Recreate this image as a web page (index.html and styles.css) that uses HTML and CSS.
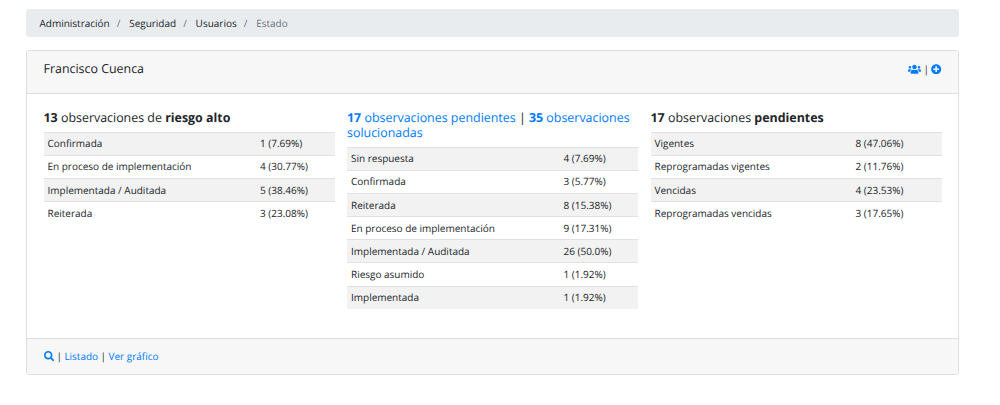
FILE: index.html
```html
<!DOCTYPE html>
<html lang="es">
<head>
<meta charset="utf-8">
<title>Estado</title>
<link rel="stylesheet" href="styles.css">
</head>
<body>
<nav class="breadcrumb">
  <a class="crumb">Administración</a><span class="sep">/</span><a class="crumb">Seguridad</a><span class="sep">/</span><a class="crumb">Usuarios</a><span class="sep">/</span><span class="crumb active">Estado</span>
</nav>
<main class="card">
  <header class="card-header">
    <h1 class="title">Francisco Cuenca</h1>
    <div class="actions">
      <svg class="icon users" viewBox="0 0 640 512"><path d="M96 224c35.300 0 64-28.700 64-64s-28.700-64-64-64-64 28.700-64 64 28.700 64 64 64zm448 0c35.300 0 64-28.700 64-64s-28.700-64-64-64-64 28.700-64 64 28.700 64 64 64zm32 32h-64c-17.600 0-33.500 7.100-45.100 18.600 40.300 22.100 68.900 62 75.100 109.400h66c17.700 0 32-14.300 32-32v-32c0-35.300-28.700-64-64-64zm-256 0c61.900 0 112-50.100 112-112S381.900 32 320 32 208 82.100 208 144s50.100 112 112 112zm76.800 32h-8.300c-20.800 10-43.900 16-68.500 16s-47.600-6-68.500-16h-8.300C179.600 288 128 339.600 128 403.200V432c0 26.500 21.500 48 48 48h288c26.500 0 48-21.500 48-48v-28.800c0-63.600-51.600-115.200-115.200-115.200zm-223.700-13.400C161.500 263.100 145.600 256 128 256H64c-35.300 0-64 28.700-64 64v32c0 17.700 14.300 32 32 32h65.900c6.300-47.400 34.900-87.300 75.200-109.400z"/></svg>
      <span class="pipe">|</span>
      <svg class="icon" viewBox="0 0 512 512"><path d="M256 8C119 8 8 119 8 256s111 248 248 248 248-111 248-248S393 8 256 8zm144 276c0 6.600-5.400 12-12 12h-92v92c0 6.600-5.400 12-12 12h-56c-6.600 0-12-5.400-12-12v-92h-92c-6.600 0-12-5.400-12-12v-56c0-6.600 5.400-12 12-12h92v-92c0-6.600 5.400-12 12-12h56c6.600 0 12 5.400 12 12v92h92c6.600 0 12 5.400 12 12v56z"/></svg>
    </div>
  </header>
  <div class="card-body">
    <section>
      <h2 class="heading"><b>13</b> observaciones de <b>riesgo alto</b></h2>
      <div class="table">
        <div class="row"><span>Confirmada</span><span>1 (7.69%)</span></div>
        <div class="row"><span>En proceso de implementación</span><span>4 (30.77%)</span></div>
        <div class="row"><span>Implementada / Auditada</span><span>5 (38.46%)</span></div>
        <div class="row"><span>Reiterada</span><span>3 (23.08%)</span></div>
      </div>
    </section>
    <section>
      <h2 class="heading"><a class="link"><b>17</b> observaciones pendientes</a> | <a class="link"><b>35</b> observaciones<br>solucionadas</a></h2>
      <div class="table">
        <div class="row"><span>Sin respuesta</span><span>4 (7.69%)</span></div>
        <div class="row"><span>Confirmada</span><span>3 (5.77%)</span></div>
        <div class="row"><span>Reiterada</span><span>8 (15.38%)</span></div>
        <div class="row"><span>En proceso de implementación</span><span>9 (17.31%)</span></div>
        <div class="row"><span>Implementada / Auditada</span><span>26 (50.0%)</span></div>
        <div class="row"><span>Riesgo asumido</span><span>1 (1.92%)</span></div>
        <div class="row"><span>Implementada</span><span>1 (1.92%)</span></div>
      </div>
    </section>
    <section>
      <h2 class="heading"><b>17</b> observaciones <b>pendientes</b></h2>
      <div class="table narrow">
        <div class="row"><span>Vigentes</span><span>8 (47.06%)</span></div>
        <div class="row"><span>Reprogramadas vigentes</span><span>2 (11.76%)</span></div>
        <div class="row"><span>Vencidas</span><span>4 (23.53%)</span></div>
        <div class="row"><span>Reprogramadas vencidas</span><span>3 (17.65%)</span></div>
      </div>
    </section>
  </div>
  <footer class="card-footer">
    <svg class="icon" viewBox="0 0 512 512"><path d="M505 442.700L405.300 343c-4.500-4.500-10.600-7-17-7H372c27.600-35.300 44-79.700 44-128C416 93.100 322.900 0 208 0S0 93.100 0 208s93.100 208 208 208c48.300 0 92.700-16.400 128-44v16.300c0 6.400 2.500 12.500 7 17l99.700 99.700c9.400 9.400 24.600 9.400 33.900 0l28.300-28.300c9.400-9.400 9.400-24.600.1-34zM208 336c-70.700 0-128-57.200-128-128 0-70.700 57.200-128 128-128 70.700 0 128 57.200 128 128 0 70.700-57.200 128-128 128z"/></svg>
    <span class="pipe">|</span>
    <a class="link">Listado</a>
    <span class="pipe">|</span>
    <a class="link">Ver gráfico</a>
  </footer>
</main>
</body>
</html>
```
FILE: styles.css
```css
* { box-sizing: border-box; }
body {
  margin: 0;
  padding: 9px 41px 0 26px;
  font: 10px/16px "Open Sans", sans-serif;
  letter-spacing: -0.01px;
  text-rendering: geometricPrecision;
  color: #212529;
  background: #fff;
}
.breadcrumb {
  display: flex;
  height: 28px;
  padding: 6px 13.500px;
  margin-bottom: 13px;
  border-radius: 3px;
  background: #e9ecef;
}
.sep { padding: 0 8.800px 0 7px; color: #6c757d; }
.active { color: #6c757d; }
.card {
  height: 325px;
  display: flex;
  flex-direction: column;
  border: 1px solid #dfdfdf;
  border-radius: 3px;
  overflow: hidden;
}
.card-header {
  height: 43px;
  padding: 0 16.500px 6px;
  display: flex;
  align-items: center;
  justify-content: space-between;
  background: #f7f7f7;
  border-bottom: 1px solid #dfdfdf;
}
.title { margin: 0; font-size: 12.450px; font-weight: 400; }
.actions { display: flex; align-items: center; gap: 2.200px; }
.icon { width: 10.400px; height: 10.400px; fill: #007bff; }
.users { width: 13px; }
.link { color: #007bff; }
.card-body {
  flex: 1;
  display: grid;
  grid-template-columns: repeat(3, 291px);
  column-gap: 12.500px;
  padding: 16px 16.500px 0;
  align-items: start;
}
.heading {
  margin: 0 0 6.500px;
  font-size: 12.450px;
  line-height: 15px;
  font-weight: 400;
  white-space: nowrap;
}
.row {
  display: grid;
  grid-template-columns: 212.500px 1fr;
  height: 23.200px;
  padding: 2.700px 4px 0;
  border-top: 1px solid #dee2e6;
}
.narrow .row { grid-template-columns: 201px 1fr; }
.row:nth-child(odd) { background: #f2f2f2; }
.card-footer {
  height: 36px;
  display: flex;
  align-items: center;
  gap: 2.500px;
  padding: 0 16.500px 1px;
  background: #f7f7f7;
  border-top: 1px solid #dfdfdf;
}
```
